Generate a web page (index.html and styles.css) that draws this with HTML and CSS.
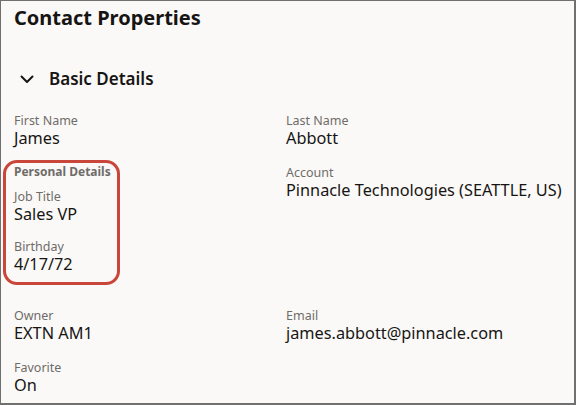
FILE: index.html
```html
<!DOCTYPE html>
<html>
<head>
<meta charset="utf-8">
<link rel="stylesheet" href="styles.css">
</head>
<body>
<div class="panel">
  <h1 class="title">Contact Properties</h1>
  <div class="section-head">
    <svg class="chevron" width="14" height="9" viewBox="0 0 14 9"><path d="M1.5 1.5 L7 7 L12.5 1.5" fill="none" stroke="#161513" stroke-width="2" stroke-linecap="round" stroke-linejoin="round"/></svg>
    <span class="section-title">Basic Details</span>
  </div>
  <div class="grid">
    <div class="field"><div class="label">First Name</div><div class="value">James</div></div>
    <div class="field"><div class="label">Last Name</div><div class="value">Abbott</div></div>
    <div class="group">
      <div class="group-title">Personal Details</div>
      <div class="field"><div class="label">Job Title</div><div class="value">Sales VP</div></div>
      <div class="field"><div class="label">Birthday</div><div class="value">4/17/72</div></div>
    </div>
    <div class="field"><div class="label">Account</div><div class="value">Pinnacle Technologies (SEATTLE, US)</div></div>
    <div class="field"><div class="label">Owner</div><div class="value">EXTN AM1</div></div>
    <div class="field"><div class="label">Email</div><div class="value">james.abbott@pinnacle.com</div></div>
    <div class="field"><div class="label">Favorite</div><div class="value">On</div></div>
  </div>
</div>
</body>
</html>
```

FILE: styles.css
```css
html, body {
  margin: 0;
  padding: 0;
}
body {
  font-family: "Noto Sans", sans-serif;
  color: #161513;
  background: #fbf9f8;
}
.panel {
  box-sizing: border-box;
  width: 576px;
  height: 405px;
  background: #fbf9f8;
  border-top: 1px solid #707070;
  border-left: 1px solid #707070;
  border-right: 2px solid #707070;
  border-bottom: 2px solid #707070;
  padding: 3px 8px 0 13px;
  overflow: hidden;
}
.title {
  margin: 0;
  font-size: 20px;
  line-height: 28px;
  font-weight: 700;
}
.section-head {
  margin-top: 35px;
  display: flex;
  align-items: center;
  height: 24px;
}
.chevron {
  margin-left: 6px;
  margin-right: 15px;
}
.section-title {
  font-size: 17px;
  line-height: 24px;
  font-weight: 600;
}
.grid {
  margin-top: 21px;
  display: grid;
  grid-template-columns: 272px 1fr;
  row-gap: 16px;
  align-items: start;
}
.label {
  font-size: 12.5px;
  line-height: 17px;
  color: #6f6c68;
  white-space: nowrap;
}
.value {
  font-size: 16.3px;
  line-height: 19px;
  white-space: nowrap;
}
.group {
  position: relative;
  margin-bottom: 17px;
}
.group::before {
  content: "";
  position: absolute;
  left: -11px;
  top: -4px;
  width: 117px;
  height: 125px;
  box-sizing: border-box;
  border: 3px solid #c8463a;
  border-radius: 14px;
}
.group-title {
  font-size: 12px;
  line-height: 16px;
  font-weight: 700;
  color: #6f6c68;
  margin-bottom: 8px;
  white-space: nowrap;
}
.group .field + .field {
  margin-top: 14px;
}
```
